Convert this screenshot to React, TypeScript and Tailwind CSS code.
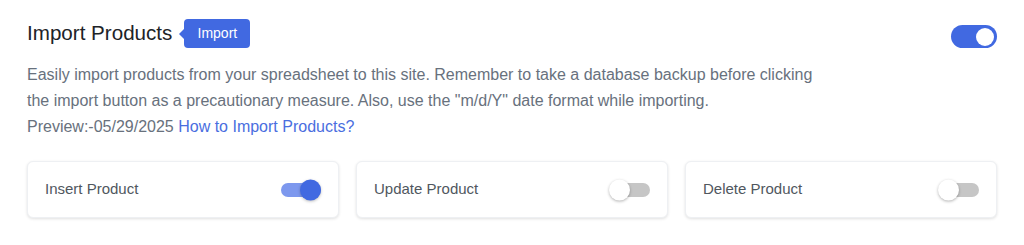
import React from "react";

function CardSwitch({ on }: { on: boolean }) {
  return (
    <div className={"relative h-[14px] w-[40px] rounded-full " + (on ? "bg-[#7d98ee]" : "bg-[#c6c6c6]")}>
      {on ? (
        <div className="absolute right-0 top-1/2 h-[21px] w-[21px] -translate-y-1/2 rounded-full bg-[#4169e1] shadow-[0_1px_3px_rgba(0,0,0,0.25)]" />
      ) : (
        <div className="absolute -left-[1px] top-1/2 h-[21px] w-[21px] -translate-y-1/2 rounded-full bg-white shadow-[0_1px_3px_rgba(0,0,0,0.3)]" />
      )}
    </div>
  );
}

function Card({ label, on }: { label: string; on: boolean }) {
  return (
    <div className="flex h-[57px] items-center justify-between rounded-[6px] border border-[#eef0f3] bg-white pl-[17px] pr-[17px] shadow-[0_1px_3px_rgba(0,0,0,0.12)]">
      <span className="text-[15px] text-[#50575e]">{label}</span>
      <CardSwitch on={on} />
    </div>
  );
}

export default function App() {
  return (
    <div className="h-[245px] w-[1024px] bg-white px-[27px] pt-[19px] font-['Liberation_Sans',Arial,sans-serif]">
      <div className="flex h-[29px] items-start justify-between">
        <div className="flex h-[29px] items-center">
          <h2 className="text-[20.6px] leading-none text-[#1d2327]">Import Products</h2>
          <div className="relative ml-[12px] flex h-[29px] w-[66px] items-center justify-center rounded-[4px] bg-[#4169e1] text-[14px] text-white">
            <span className="absolute -left-[5px] top-1/2 h-0 w-0 -translate-y-1/2 border-y-[5px] border-r-[5px] border-y-transparent border-r-[#4169e1]" />
            Import
          </div>
        </div>
        <div className="relative mt-[6px] h-[23px] w-[46px] rounded-full bg-[#4169e1]">
          <div className="absolute right-[3px] top-1/2 h-[18px] w-[18px] -translate-y-1/2 rounded-full bg-white" />
        </div>
      </div>
      <div className="mt-[14px] text-[16px] leading-[26px] text-[#68717d]">
        <p className="w-[800px]">
          Easily import products from your spreadsheet to this site. Remember to take a database backup before clicking the import button as a precautionary measure. Also, use the "m/d/Y" date format while importing.
        </p>
        <div>
          Preview:-05/29/2025 <a className="text-[#4a6ee0]">How to Import Products?</a>
        </div>
      </div>
      <div className="mt-[21px] grid grid-cols-3 gap-[17px]">
        <Card label="Insert Product" on={true} />
        <Card label="Update Product" on={false} />
        <Card label="Delete Product" on={false} />
      </div>
    </div>
  );
}
